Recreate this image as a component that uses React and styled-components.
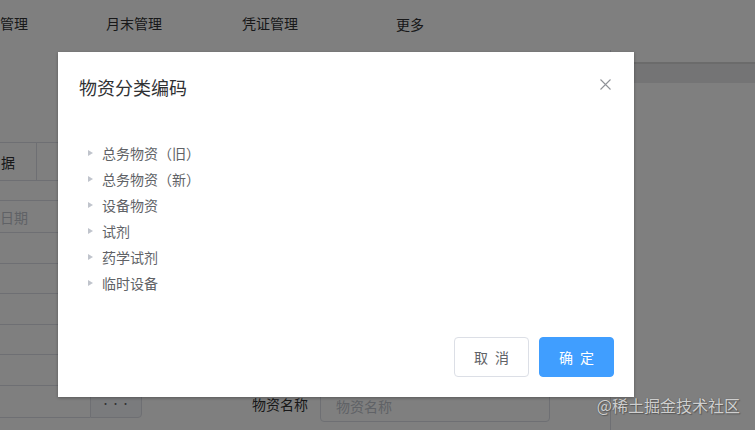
import React from 'react';
import styled, { createGlobalStyle } from 'styled-components';

const GlobalStyle = createGlobalStyle`
    html, body {
        margin: 0;
        padding: 0;
        width: 755px;
        height: 430px;
        overflow: hidden;
        background: #fff;
        font-family: "Noto Sans CJK SC", "Noto Sans", sans-serif;
    }
`;

const Page = styled.div`
    position: relative;
    width: 755px;
    height: 430px;
    overflow: hidden;
    background: #fff;
    color: #303133;
`;

const TopNav = styled.div`
    height: 50px;
    display: flex;
    align-items: center;
    font-size: 14px;
    line-height: 20px;
`;

const NavItem = styled.div`
    flex: none;
    width: ${({ w }) => w}px;
    padding-bottom: ${({ low }) => (low ? 2 : 4)}px;
    white-space: nowrap;
`;

const Main = styled.div`
    display: flex;
    height: 380px;
`;

const LeftPane = styled.div`
    width: 610px;
    flex: none;
    padding-top: 92px;
    box-sizing: border-box;
`;

const HeaderRow = styled.div`
    display: flex;
    height: 39px;
    border-top: 1px solid #dcdfe6;
    border-bottom: 1px solid #dcdfe6;
    box-sizing: border-box;
`;

const HeaderCell = styled.div`
    width: 37px;
    border-right: 1px solid #dcdfe6;
    display: flex;
    align-items: center;
    padding-left: 1px;
    box-sizing: border-box;
    font-size: 14px;
    white-space: nowrap;
`;

const Rows = styled.div`
    margin-top: 19px;
    border-top: 1px solid #dcdfe6;
`;

const Row = styled.div`
    height: ${({ h }) => h}px;
    border-bottom: 1px solid #dcdfe6;
    box-sizing: border-box;
    display: flex;
    align-items: center;
    font-size: 14px;
    color: #c0c4cc;
`;

const BottomRow = styled.div`
    display: flex;
    align-items: flex-start;
`;

const PickInput = styled.div`
    width: 90px;
    height: 32px;
    border-bottom: 1px solid #dcdfe6;
    box-sizing: border-box;
`;

const DotsButton = styled.div`
    width: 52px;
    height: 32px;
    border: 1px solid #dcdfe6;
    border-radius: 0 4px 4px 0;
    background: #f5f7fa;
    box-sizing: border-box;
    display: flex;
    align-items: flex-end;
    justify-content: center;
    padding-bottom: 8px;
    font-size: 9px;
    line-height: 10px;
    letter-spacing: 1px;
    color: #606266;
`;

const Label = styled.div`
    margin: 8px 0 0 110px;
    width: 68px;
    font-size: 14px;
    line-height: 20px;
    color: #303133;
`;

const TextInput = styled.div`
    margin-top: 4px;
    width: 230px;
    height: 32px;
    border: 1px solid #dcdfe6;
    border-radius: 4px;
    box-sizing: border-box;
    padding-left: 15px;
    display: flex;
    align-items: center;
    font-size: 14px;
    color: #c0c4cc;
`;

const RightPane = styled.div`
    flex: 1;
    border-left: 1px solid #dcdfe6;
    padding-top: 12px;
`;

const TabBand = styled.div`
    height: 21px;
    background: #e9e9eb;
    border-top: 2px solid #d6d6d6;
    box-sizing: border-box;
`;

const Overlay = styled.div`
    position: absolute;
    inset: 0;
    background: rgba(0, 0, 0, 0.5);
`;

const Dialog = styled.div`
    position: absolute;
    top: 52px;
    left: 58px;
    width: 576px;
    height: 345px;
    background: #fff;
    box-shadow: 0 1px 3px rgba(0, 0, 0, 0.3);
    display: flex;
    flex-direction: column;
`;

const DialogHeader = styled.div`
    padding: 23px 20px 0 21px;
`;

const Title = styled.div`
    font-size: 18px;
    line-height: 24px;
    color: #303133;
`;

const CloseBtn = styled.div`
    position: absolute;
    top: 27px;
    right: 23px;
    width: 11px;
    height: 11px;
    display: flex;
`;

const DialogBody = styled.div`
    padding: 41px 20px 0;
`;

const TreeNode = styled.div`
    height: 26px;
    display: flex;
    align-items: center;
    font-size: 14px;
    color: #606266;
`;

const Caret = styled.span`
    width: 24px;
    display: flex;
    justify-content: center;

    &::before {
        content: '';
        border-left: 5px solid #c0c4cc;
        border-top: 3.5px solid transparent;
        border-bottom: 3.5px solid transparent;
    }
`;

const DialogFooter = styled.div`
    margin-top: auto;
    padding: 0 20px 20px;
    display: flex;
    justify-content: flex-end;
    gap: 10px;
`;

const Button = styled.button`
    height: 40px;
    padding: 0 19px;
    border-radius: 4px;
    font-family: inherit;
    font-size: 14px;
    border: 1px solid ${({ primary }) => (primary ? '#409eff' : '#dcdfe6')};
    background: ${({ primary }) => (primary ? '#409eff' : '#fff')};
    color: ${({ primary }) => (primary ? '#fff' : '#606266')};
    white-space: pre;
`;

const Watermark = styled.div`
    position: absolute;
    right: 15px;
    bottom: 15px;
    font-size: 16px;
    line-height: 20px;
    color: #cfcfcf;
    text-shadow: 0 0 1px #4a4a4a, 1px 1px 1px #5a5a5a;
`;

const treeData = ['总务物资（旧）', '总务物资（新）', '设备物资', '试剂', '药学试剂', '临时设备'];

const App = () => {
    return (
        <Page>
            <GlobalStyle />
            <TopNav>
                <NavItem w={106}>管理</NavItem>
                <NavItem w={136}>月末管理</NavItem>
                <NavItem w={154}>凭证管理</NavItem>
                <NavItem w={60} low>更多</NavItem>
            </TopNav>
            <Main>
                <LeftPane>
                    <HeaderRow>
                        <HeaderCell>据</HeaderCell>
                    </HeaderRow>
                    <Rows>
                        <Row h={32}>日期</Row>
                        <Row h={30.6} />
                        <Row h={30.6} />
                        <Row h={30.6} />
                        <Row h={30.6} />
                        <Row h={30.6} />
                    </Rows>
                    <BottomRow>
                        <PickInput />
                        <DotsButton>···</DotsButton>
                        <Label>物资名称</Label>
                        <TextInput>物资名称</TextInput>
                    </BottomRow>
                </LeftPane>
                <RightPane>
                    <TabBand />
                </RightPane>
            </Main>

            <Overlay />
            <Dialog>
                <DialogHeader>
                    <Title>物资分类编码</Title>
                </DialogHeader>
                <CloseBtn>
                    <svg width="11" height="11" viewBox="0 0 11 11">
                        <path d="M0.5 0.5 L10.5 10.5 M10.5 0.5 L0.5 10.5" stroke="#909399" strokeWidth="1.1" fill="none" />
                    </svg>
                </CloseBtn>
                <DialogBody>
                    {treeData.map((label) => (
                        <TreeNode key={label}>
                            <Caret />
                            {label}
                        </TreeNode>
                    ))}
                </DialogBody>
                <DialogFooter>
                    <Button>{'取\u2002消'}</Button>
                    <Button primary>{'确\u2002定'}</Button>
                </DialogFooter>
            </Dialog>
            <Watermark>@稀土掘金技术社区</Watermark>
        </Page>
    );
};

export default App;
